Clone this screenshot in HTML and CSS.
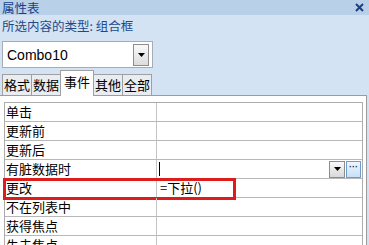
FILE: index.html
```html
<!DOCTYPE html>
<html lang="zh-CN">
<head>
<meta charset="UTF-8">
<title>属性表</title>
<link rel="stylesheet" href="styles.css">
</head>
<body>
<div class="sheet">
    <div class="titlebar">
        <span class="title">属性表</span>
        <svg class="close" width="9" height="9" viewBox="0 0 9 9"><path d="M1 1L8 8M8 1L1 8" stroke="#1c3f82" stroke-width="2"/></svg>
    </div>
    <div class="subtitle">所选内容的类型: 组合框</div>
    <div class="combo">
        <span class="combo-text">Combo10</span>
        <span class="combo-btn"><svg width="7" height="4" viewBox="0 0 7 4"><path d="M0 0H7L3.5 4Z" fill="#000"/></svg></span>
    </div>
    <div class="tabs">
        <div class="tab">格式</div>
        <div class="tab">数据</div>
        <div class="tab active">事件</div>
        <div class="tab">其他</div>
        <div class="tab">全部</div>
    </div>
    <div class="panel">
        <div class="grid">
            <div class="row"><div class="name">单击</div><div class="value"></div></div>
            <div class="row"><div class="name">更新前</div><div class="value"></div></div>
            <div class="row"><div class="name">更新后</div><div class="value"></div></div>
            <div class="row"><div class="name">有脏数据时</div>
                <div class="value editing">
                    <span class="caret"></span>
                    <span class="drop-btn"><svg width="7" height="4" viewBox="0 0 7 4"><path d="M0 0H7L3.5 4Z" fill="#000"/></svg></span>
                    <span class="more-btn">···</span>
                </div>
            </div>
            <div class="row marked"><div class="name">更改</div><div class="value">=下拉()</div><div class="highlight"></div></div>
            <div class="row"><div class="name">不在列表中</div><div class="value"></div></div>
            <div class="row"><div class="name">获得焦点</div><div class="value"></div></div>
            <div class="row"><div class="name">失去焦点</div><div class="value"></div></div>
        </div>
    </div>
</div>
</body>
</html>
```

FILE: styles.css
```css
body {
    margin: 0;
    padding: 0;
    background-color: #d4e3f3;
    font-family: "Noto Sans CJK SC", "Liberation Sans", sans-serif;
    overflow: hidden;
}
.sheet {
    width: 369px;
    height: 245px;
    overflow: hidden;
}
.titlebar {
    height: 15px;
    background-color: #b9d0e9;
    display: flex;
    align-items: center;
    justify-content: space-between;
    padding: 0 5px 0 2px;
}
.title {
    font-size: 12.5px;
    line-height: 15px;
    color: #15428b;
}
.subtitle {
    height: 21px;
    padding: 2px 0 0 2px;
    font-size: 12.5px;
    line-height: 18px;
    color: #1e4a88;
}
.combo {
    margin: 3px 0 0 2px;
    width: 149px;
    height: 25px;
    background-color: #fff;
    border: 1px solid #a5acb5;
    display: flex;
    align-items: center;
    justify-content: space-between;
}
.combo-text {
    font-family: "Liberation Sans", sans-serif;
    font-size: 14px;
    padding-left: 4px;
    color: #000;
}
.combo-btn {
    width: 14px;
    height: 20px;
    margin-right: 3px;
    border: 1px solid #8d8d8d;
    background: linear-gradient(#fafafa, #dcdcdc);
    display: flex;
    align-items: center;
    justify-content: center;
}
.tabs {
    display: flex;
    align-items: flex-end;
    height: 25px;
    margin-top: 2px;
    padding-left: 2px;
}
.tab {
    height: 20px;
    padding: 0 1px;
    font-size: 13px;
    line-height: 20px;
    color: #000;
    background-color: #e9ecf0;
    border: 1px solid #a0a0a0;
    border-bottom: none;
    margin-right: -1px;
}
.tab.active {
    height: 25px;
    padding: 0 3px;
    line-height: 21px;
    background-color: #fff;
    position: relative;
    z-index: 1;
    margin-bottom: -1px;
}
.panel {
    height: 150px;
    margin-right: 2px;
    background-color: #fff;
    border: 1px solid #9c9c9c;
    border-left: none;
    padding: 6px 3px 0 4px;
    overflow: hidden;
}
.grid {
    border: 1px solid #acacac;
    border-bottom: none;
}
.row {
    display: grid;
    grid-template-columns: 152px 1fr;
    height: 18px;
    border-bottom: 1px solid #b8b8b8;
    position: relative;
}
.name {
    padding-left: 1px;
    font-size: 13px;
    line-height: 18px;
    border-right: 1px solid #c4c4c4;
    color: #000;
}
.value {
    padding-left: 3px;
    font-size: 13px;
    line-height: 18px;
    color: #000;
}
.editing {
    display: flex;
    align-items: center;
    padding-left: 2px;
}
.caret {
    width: 1px;
    height: 14px;
    background-color: #000;
}
.drop-btn {
    margin-left: auto;
    width: 14px;
    height: 15px;
    border: 1px solid #8d8d8d;
    background: linear-gradient(#fafafa, #d8d8d8);
    display: flex;
    align-items: center;
    justify-content: center;
}
.more-btn {
    width: 13px;
    height: 15px;
    margin: 0 1px 0 1px;
    border: 1px solid #6e9ccb;
    background: linear-gradient(#eef6fd, #c7e0f7);
    font-size: 9px;
    line-height: 11px;
    font-weight: bold;
    text-align: center;
    color: #1a2f5a;
    font-family: "Liberation Sans", sans-serif;
}
.highlight {
    position: absolute;
    left: -2px;
    top: -1px;
    width: 227px;
    height: 16px;
    border: 3px solid #de1c1c;
}
```
